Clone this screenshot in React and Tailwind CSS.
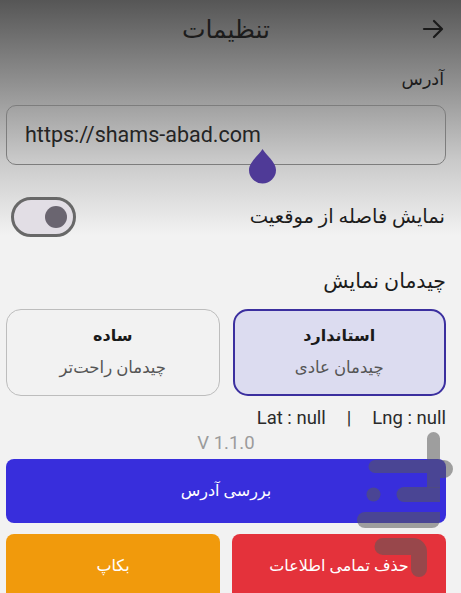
export default function App() {
  return (
    <div
      dir="rtl"
      className="relative h-[593px] w-[461px] overflow-hidden bg-[linear-gradient(to_bottom,#565656_0px,#8e8e8e_80px,#c9c9c9_160px,#f2f2f2_235px)] font-['Roboto','DejaVu_Sans',sans-serif] text-[#1d1d1d]"
    >
      <div className="pl-[6px] pr-[15px]">
        {/* top bar */}
        <header className="grid h-[58px] grid-cols-[40px_1fr_40px] items-center">
          <div className="flex justify-start pr-[2px]">
            <svg width="22" height="20" viewBox="0 0 22 20" fill="none" stroke="#1a1a1a" strokeWidth="2.2" strokeLinecap="round" strokeLinejoin="round">
              <path d="M2 10h17" />
              <path d="M12 2l8 8-8 8" />
            </svg>
          </div>
          <h1 className="text-center text-[25px] font-normal leading-none text-[#1c1c1c]">تنظیمات</h1>
          <div />
        </header>

        <div className="mt-[9px] pr-[2px] text-[17.5px] leading-[24px] text-[#1c1c1c]">آدرس</div>

        {/* address input */}
        <div className="relative mt-[14px]">
          <div dir="ltr" className="flex h-[60px] items-center rounded-[10px] border border-[#7d7d7d] pl-[18px] text-[21.5px] text-[#242424]">
            https://shams-abad.com
          </div>
          <svg className="absolute left-[242px] top-[43px]" width="29" height="36" viewBox="0 0 29 36">
            <path d="M14.5 1C18 7 28 14 28 22a13.5 13.5 0 0 1-27 0C1 14 11 7 14.5 1z" fill="#4f3a97" />
          </svg>
        </div>

        {/* distance toggle */}
        <div className="mt-[32px] flex h-[40px] items-center justify-between">
          <span className="pr-[1px] text-[19.5px] text-[#1c1c1c]">نمایش فاصله از موقعیت</span>
          <div dir="ltr" className="ml-[5px] flex h-[40px] w-[65px] items-center justify-end rounded-full border-[3px] border-[#686868] bg-[#e2dee5] pr-[6px]">
            <div className="h-[22px] w-[22px] rounded-full bg-[#6a6570]" />
          </div>
        </div>

        <div className="mt-[30px] text-[20.5px] leading-[28px] text-[#1c1c1c]">چیدمان نمایش</div>

        {/* layout choices */}
        <div className="mt-[14px] grid grid-cols-2 gap-[13px]">
          <div className="flex h-[87px] flex-col items-center justify-center gap-[8px] rounded-[15px] border-[2.5px] border-[#3b2f9f] bg-[#dcdcf0]">
            <span className="text-[16px] font-bold text-[#1a1a1a]">استاندارد</span>
            <span className="text-[16.5px] text-[#555555]">چیدمان عادی</span>
          </div>
          <div className="flex h-[87px] flex-col items-center justify-center gap-[8px] rounded-[15px] border border-[#bdbdbd] bg-[#f2f2f2]">
            <span className="text-[16px] font-bold text-[#1a1a1a]">ساده</span>
            <span className="text-[16.5px] text-[#555555]">چیدمان راحت‌تر</span>
          </div>
        </div>

        <div dir="ltr" className="mt-[10px] flex justify-end text-[18.5px] leading-[24px] text-[#2a2a2a]">
          <span>Lat : null</span>
          <span className="mx-[21px]">|</span>
          <span>Lng : null</span>
        </div>

        <div className="mt-[1px] text-center text-[18.5px] leading-[24px] text-[#9b9b9b]">V 1.1.0</div>

        <button className="mt-[4px] flex h-[64px] w-full items-center justify-center rounded-[8px] bg-[#382edc] text-[16px] text-white">
          بررسی آدرس
        </button>

        <div className="mt-[11px] grid grid-cols-2 gap-[12px]">
          <button className="flex h-[64px] items-center justify-center rounded-t-[8px] bg-[#e4323b] text-[16px] text-white">
            حذف تمامی اطلاعات
          </button>
          <button className="flex h-[64px] items-center justify-center rounded-t-[8px] bg-[#f19a0c] text-[16px] text-white">
            بکاپ
          </button>
        </div>
      </div>

      {/* store watermark */}
      <svg className="pointer-events-none absolute inset-0" width="461" height="593" viewBox="0 0 461 593">
        <g fill="#5a5a5a" fillOpacity="0.55">
          <path d="M427 438.5a6.5 6.5 0 0 1 13 0V460h4a9 9 0 0 1 0 18h-4v9.5H427V473h-52a6.5 6.5 0 0 1 0-13h52z" />
          <path d="M404 487h36v15h-36a7.5 7.5 0 0 1 0-15z" />
          <circle cx="373.5" cy="494.5" r="7" />
          <path d="M365 512h75v8a8 8 0 0 1-8 8h-67a8 8 0 0 1 0-16z" />
          <path d="M383 538h30a14 14 0 0 1 14 14v17a8 8 0 0 1-16 0v-14h-28a8.5 8.5 0 0 1 0-17z" />
        </g>
      </svg>
    </div>
  );
}
